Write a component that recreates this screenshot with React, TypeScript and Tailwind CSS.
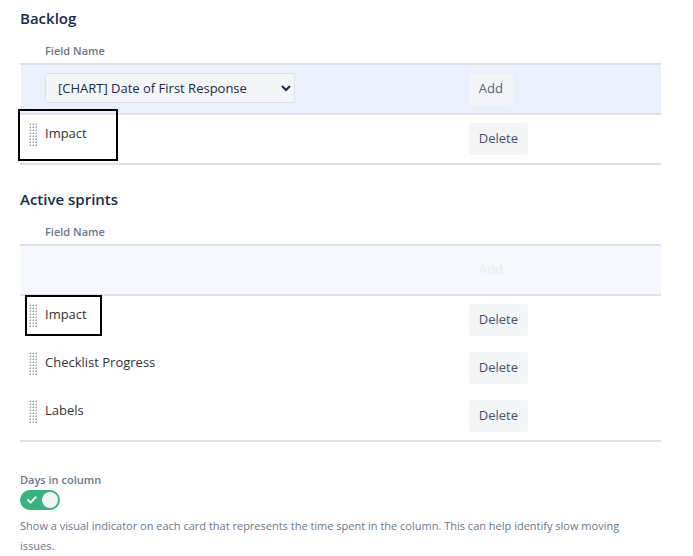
import React, { useState } from "react";

interface IField {
  name: string;
  // highlight box drawn around the field
  mark?: string;
}

interface ISection {
  title: string;
  options: string[];
  fields: IField[];
}

const sections: ISection[] = [
  {
    title: "Backlog",
    options: ["[CHART] Date of First Response"],
    fields: [{ name: "Impact", mark: "-left-[2px] -top-[6px] w-[100px] h-[52px]" }],
  },
  {
    title: "Active sprints",
    options: [],
    fields: [
      { name: "Impact", mark: "left-[5px] -top-[1px] w-[77px] h-[41px]" },
      { name: "Checklist Progress" },
      { name: "Labels" },
    ],
  },
];

const DragHandle = () => (
  <svg width="9" height="24" viewBox="0 0 9 24" className="ml-[9px]" shapeRendering="crispEdges">
    {[0, 3, 6, 9, 12, 15, 18, 21].map((y) =>
      [0, 3, 6].map((x) => (
        <g key={`${x}-${y}`}>
          <rect x={x} y={y + 1} width="1" height="1" fill="#c4c4c4" />
          <rect x={x + 1} y={y} width="1" height="1" fill="#c4c4c4" />
          <rect x={x + 1} y={y + 1} width="1" height="1" fill="#a8a8a8" />
        </g>
      ))
    )}
  </svg>
);

const FieldTable = ({ title, options, fields }: ISection) => {
  const empty = options.length === 0;

  return (
    <section>
      <h2 className="text-[15px] leading-5 font-semibold text-[#172b4d]">{title}</h2>
      <table className="mt-3 w-full table-fixed border-separate border-spacing-0 border-b-2 border-[#dfe1e6] text-left">
        <thead>
          <tr className="h-[25px]">
            <th className="w-[25px] border-b-2 border-[#dfe1e6]"></th>
            <th className="border-b-2 border-[#dfe1e6] pb-0.5 text-[11px] leading-4 font-semibold text-[#6b778c]">
              Field Name
            </th>
            <th className="w-[30%] border-b-2 border-[#dfe1e6]"></th>
          </tr>
        </thead>
        <tbody>
          <tr className={`h-[50px] ${empty ? "bg-[#f5f8ff]" : "bg-[#eaf0fd]"}`}>
            <td className="border-b-2 border-[#dfe1e6] shadow-[inset_1px_0_white]"></td>
            <td className="border-b-2 border-[#dfe1e6] pt-2 align-top">
              {!empty && (
                <select
                  aria-label="Field"
                  className="block h-[30px] w-[250px] rounded-[3px] border border-[#dfe1e6] bg-[#f4f5f7] pl-2 text-[13px] text-[#172b4d]"
                >
                  {options.map((option) => (
                    <option key={option}>{option}</option>
                  ))}
                </select>
              )}
            </td>
            <td className="border-b-2 border-[#dfe1e6] pt-2 align-top">
              <button
                disabled={empty}
                className="block h-8 rounded-[3px] bg-[#f4f5f7] px-[10px] text-[13px] text-[#505f79] disabled:bg-[#f6f8fd] disabled:text-[#e9ebef]"
              >
                Add
              </button>
            </td>
          </tr>
          {fields.map((field) => (
            <tr key={field.name} className="h-12">
              <td className="relative pt-2 align-top">
                <DragHandle />
                {field.mark && (
                  <div className={`pointer-events-none absolute border-2 border-black ${field.mark}`} />
                )}
              </td>
              <td className="pt-2 align-top text-[13px] leading-5 text-[#333]">{field.name}</td>
              <td className="pt-2 align-top">
                <button className="block h-8 rounded-[3px] bg-[#f4f5f7] px-[10px] text-[13px] text-[#42526e]">
                  Delete
                </button>
              </td>
            </tr>
          ))}
        </tbody>
      </table>
    </section>
  );
};

const App = () => {
  const [showDays, setShowDays] = useState(true);

  return (
    <main className="bg-white pt-2 pr-8 pl-5 font-['Open_Sans','Noto_Sans',sans-serif]">
      <div className="flex flex-col gap-6">
        {sections.map((section) => (
          <FieldTable key={section.title} {...section} />
        ))}
      </div>

      <div className="mt-7">
        <label htmlFor="days" className="block text-[11px] leading-5 font-semibold text-[#6b778c]">
          Days in column
        </label>
        <div className="relative h-5 w-10">
          <input
            id="days"
            type="checkbox"
            checked={showDays}
            onChange={(e) => setShowDays(e.target.checked)}
            className="block h-5 w-10 appearance-none rounded-full bg-[#97a0af] checked:bg-[#36b37e]"
          />
          <span
            className={`pointer-events-none absolute top-[2px] h-4 w-4 rounded-full bg-[#f4f5f7] ${
              showDays ? "right-[2px]" : "left-[2px]"
            }`}
          />
          {showDays && (
            <svg
              viewBox="0 0 10 8"
              className="pointer-events-none absolute top-[6px] left-[7px] h-2 w-[10px]"
              fill="none"
              stroke="#fff"
              strokeWidth="2"
              strokeLinecap="round"
              strokeLinejoin="round"
            >
              <path d="M1 4l2.6 2.6L8.6 1.2" />
            </svg>
          )}
        </div>
        <p className="mt-1.5 pr-4 text-[11px] leading-5 text-[#6b778c]">
          Show a visual indicator on each card that represents the time spent in the column. This can help
          identify slow moving issues.
        </p>
      </div>
    </main>
  );
};

export default App;
